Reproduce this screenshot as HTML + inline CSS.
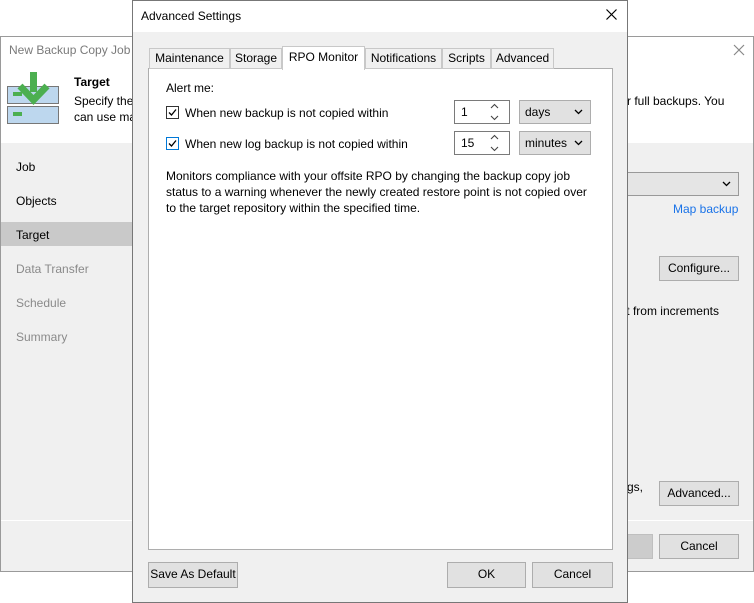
<!DOCTYPE html>
<html><head><meta charset="utf-8"><style>
*{box-sizing:border-box;margin:0;padding:0}
body{width:754px;height:603px;position:relative;background:#fff;font-family:"Liberation Sans",sans-serif;font-size:12px;color:#000;overflow:hidden}
.a{position:absolute;white-space:nowrap}
.btn{position:absolute;background:#e1e1e1;border:1px solid #adadad;text-align:center;line-height:23px;font-size:12px}
.gray{color:#6d6d6d}
</style></head><body>
<!-- background window -->
<div class="a" style="left:0;top:36px;width:754px;height:536px;border:1px solid #9a9a9a;background:#f0f0f0"></div>
<div class="a" style="left:1px;top:37px;width:752px;height:106px;background:#fff"></div>
<div class="a" style="left:9px;top:43px;color:#7a7a7a;font-size:12px">New Backup Copy Job</div>
<svg class="a" style="left:733px;top:44px" width="12" height="12"><path d="M1 1L11 11M11 1L1 11" stroke="#888" stroke-width="1.2"/></svg>
<svg class="a" style="left:7px;top:72px" width="54" height="54">
<rect x="0.5" y="14.5" width="51" height="17" fill="#bdd7ee" stroke="#777"/>
<rect x="0.5" y="34.5" width="51" height="17" fill="#bdd7ee" stroke="#777"/>
<rect x="6" y="40" width="9" height="4" fill="#4caf50"/>
<rect x="6" y="20" width="9" height="4" fill="#4caf50"/>
<rect x="23" y="0" width="7" height="20" fill="#4caf50"/>
<path d="M13 14L26.5 28L40 14" fill="none" stroke="#4caf50" stroke-width="7"/>
</svg>
<div class="a" style="left:74px;top:75px;font-weight:bold;font-size:12px">Target</div>
<div class="a" style="left:74px;top:94px">Specify the</div>
<div class="a" style="left:74px;top:110px">can use ma</div>
<div class="a" style="left:627px;top:94px">r full backups. You</div>
<div class="a" style="left:1px;top:143px;width:131px;height:377px;background:#f0f0f0"></div>
<div class="a" style="left:1px;top:222px;width:131px;height:24px;background:#c9c9c9"></div>
<div class="a" style="left:16px;top:160px">Job</div>
<div class="a" style="left:16px;top:194px">Objects</div>
<div class="a" style="left:16px;top:228px">Target</div>
<div class="a" style="left:16px;top:262px;color:#8a8a8a">Data Transfer</div>
<div class="a" style="left:16px;top:296px;color:#8a8a8a">Schedule</div>
<div class="a" style="left:16px;top:330px;color:#8a8a8a">Summary</div>
<div class="a" style="left:600px;top:172px;width:139px;height:24px;background:#e5e5e5;border:1px solid #999"></div>
<svg class="a" style="left:722px;top:181px" width="9" height="6"><path d="M1 1L4.5 4.5L8 1" fill="none" stroke="#000" stroke-width="1.3"/></svg>
<div class="a" style="left:673px;top:202px;color:#1a73e8">Map backup</div>
<div class="btn" style="left:659px;top:256px;width:80px;height:25px">Configure...</div>
<div class="a" style="right:35px;top:304px">ment from increments</div>
<div class="a" style="left:627px;top:480px">gs,</div>
<div class="btn" style="left:659px;top:481px;width:80px;height:25px">Advanced...</div>
<div class="a" style="left:1px;top:520px;width:752px;height:1px;background:#fff"></div>
<div class="a" style="left:600px;top:534px;width:53px;height:25px;background:#cccccc;border:1px solid #bfbfbf"></div>
<div class="btn" style="left:659px;top:534px;width:80px;height:25px">Cancel</div>
<!-- dialog -->
<div class="a" style="left:132px;top:0;width:496px;height:603px;background:#f0f0f0;border:1px solid #777"></div>
<div class="a" style="left:133px;top:1px;width:494px;height:31px;background:#fff"></div>
<div class="a" style="left:141px;top:9px">Advanced Settings</div>
<svg class="a" style="left:606px;top:9px" width="11" height="11"><path d="M0.5 0.5L10.5 10.5M10.5 0.5L0.5 10.5" stroke="#000" stroke-width="1.2"/></svg>
<div class="a" style="left:148px;top:68px;width:465px;height:482px;background:#fff;border:1px solid #adadad"></div>
<div class="a" style="left:149px;top:48px;width:81px;height:21px;background:#f0f0f0;border:1px solid #c8c8c8;text-align:center;line-height:19px">Maintenance</div>
<div class="a" style="left:230px;top:48px;width:52px;height:21px;background:#f0f0f0;border:1px solid #c8c8c8;text-align:center;line-height:19px">Storage</div>
<div class="a" style="left:282px;top:46px;width:83px;height:24px;background:#fff;border:1px solid #c8c8c8;border-bottom:none;text-align:center;line-height:21px">RPO Monitor</div>
<div class="a" style="left:365px;top:48px;width:77px;height:21px;background:#f0f0f0;border:1px solid #c8c8c8;text-align:center;line-height:19px">Notifications</div>
<div class="a" style="left:442px;top:48px;width:49px;height:21px;background:#f0f0f0;border:1px solid #c8c8c8;text-align:center;line-height:19px">Scripts</div>
<div class="a" style="left:491px;top:48px;width:63px;height:21px;background:#f0f0f0;border:1px solid #c8c8c8;text-align:center;line-height:19px">Advanced</div>
<div class="a" style="left:166px;top:81px">Alert me:</div>
<svg class="a" style="left:166px;top:106px" width="13" height="13"><rect x="0.5" y="0.5" width="12" height="12" fill="#fff" stroke="#333"/><path d="M3 6.5L5.5 9L10 3.5" fill="none" stroke="#000" stroke-width="1.3"/></svg>
<div class="a" style="left:185px;top:106px">When new backup is not copied within</div>
<svg class="a" style="left:166px;top:137px" width="13" height="13"><rect x="0.5" y="0.5" width="12" height="12" fill="#fff" stroke="#0078d7"/><path d="M3 6.5L5.5 9L10 3.5" fill="none" stroke="#000" stroke-width="1.3"/></svg>
<div class="a" style="left:185px;top:137px">When new log backup is not copied within</div>
<div class="a" style="left:454px;top:100px;width:56px;height:24px;border:1px solid #7a7a7a;background:#fff;padding-left:6px;line-height:22px">1</div>
<svg class="a" style="left:490px;top:103px" width="9" height="18"><path d="M1 5L4.5 1.5L8 5M1 13L4.5 16.5L8 13" fill="none" stroke="#444" stroke-width="1.1"/></svg>
<div class="a" style="left:454px;top:131px;width:56px;height:24px;border:1px solid #7a7a7a;background:#fff;padding-left:6px;line-height:22px">15</div>
<svg class="a" style="left:490px;top:134px" width="9" height="18"><path d="M1 5L4.5 1.5L8 5M1 13L4.5 16.5L8 13" fill="none" stroke="#444" stroke-width="1.1"/></svg>
<div class="a" style="left:519px;top:100px;width:72px;height:24px;border:1px solid #adadad;background:#e1e1e1;padding-left:5px;line-height:22px">days</div>
<svg class="a" style="left:574px;top:109px" width="9" height="6"><path d="M1 1L4.5 4.5L8 1" fill="none" stroke="#000" stroke-width="1.3"/></svg>
<div class="a" style="left:519px;top:131px;width:72px;height:24px;border:1px solid #adadad;background:#e1e1e1;padding-left:5px;line-height:22px">minutes</div>
<svg class="a" style="left:574px;top:140px" width="9" height="6"><path d="M1 1L4.5 4.5L8 1" fill="none" stroke="#000" stroke-width="1.3"/></svg>
<div class="a" style="left:166px;top:168px;line-height:16px">Monitors compliance with your offsite RPO by changing the backup copy job<br>status to a warning whenever the newly created restore point is not copied over<br>to the target repository within the specified time.</div>
<div class="btn" style="left:148px;top:562px;width:90px;height:26px">Save As Default</div>
<div class="btn" style="left:447px;top:562px;width:79px;height:26px">OK</div>
<div class="btn" style="left:532px;top:562px;width:81px;height:26px">Cancel</div>
</body></html>
